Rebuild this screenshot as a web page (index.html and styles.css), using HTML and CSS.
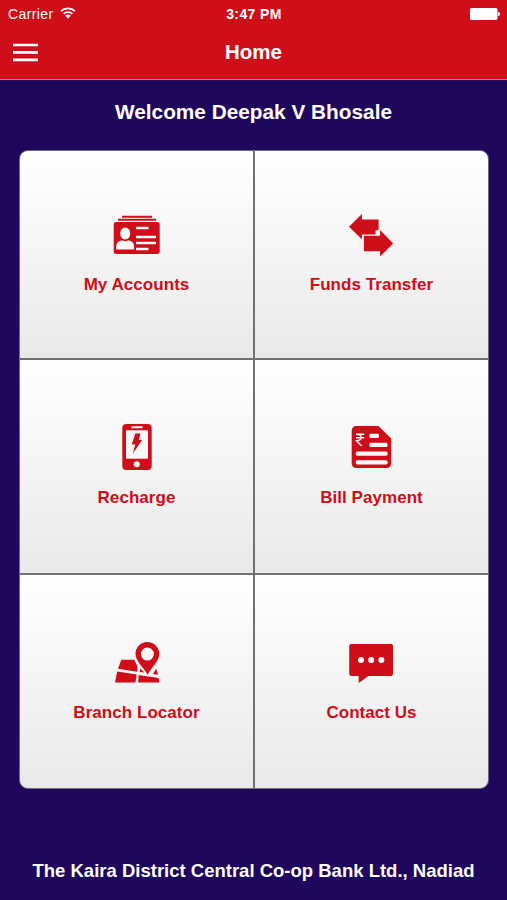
FILE: index.html
```html
<!DOCTYPE html>
<html lang="en">
	<head>
		<meta charset="utf-8" />
		<meta name="viewport" content="width=device-width, initial-scale=1.0" />
		<title>Home</title>
		<link rel="stylesheet" href="styles.css">
	</head>
	<body>
		<header class="header">
			<div class="status">
				<div class="status-carrier">
					<span>Carrier</span>
					<svg class="wifi" width="16" height="12" viewBox="0 0 16 12" fill="none" stroke="#fff" stroke-width="1.8">
						<path d="M1 4.1a10.2 10.2 0 0 1 14 0M3.6 6.8a6.5 6.5 0 0 1 8.8 0" />
						<path d="M8 11.6 5.2 8.7a3.8 3.8 0 0 1 5.6 0z" fill="#fff" stroke="none" />
					</svg>
				</div>
				<div class="status-time">3:47 PM</div>
				<svg class="battery" width="30" height="12" viewBox="0 0 30 12" fill="#fff">
					<rect width="27.5" height="12" rx="1.8" />
					<path d="M28 4a2 2 0 0 1 0 4z" />
				</svg>
			</div>
			<div class="navbar">
				<button type="button" class="menu" aria-label="Menu">
					<svg width="25" height="19" viewBox="0 0 25 19" stroke="#fff" stroke-width="2.7">
						<path d="M0 2h25M0 9.4h25M0 16.9h25" />
					</svg>
				</button>
				<h1>Home</h1>
			</div>
		</header>

		<main>
			<h2 class="welcome">Welcome Deepak V Bhosale</h2>

			<nav class="grid">
				<a class="tile">
					<svg class="icon" width="48" height="40" viewBox="0 0 48 40" fill="#ce0e18">
						<path d="M9 .7h30v2H9zM5 3.8h38v2H5z" />
						<rect x=".7" y="7" width="46" height="32" rx="2.5" />
						<g fill="#f8f8f8">
							<ellipse cx="12.2" cy="18.6" rx="5" ry="6" />
							<path d="M3.3 34.6c-.7-6 1.3-8.5 5.8-9.4 2 1.4 4.2 1.4 6.2 0 4.6.9 6.3 3.5 5.8 9.4z" />
							<path d="M23 11.8h12.5v2.4H23zM23 20.8h20v2.4H23zM23 26.8h20v2.4H23zM23 32.8h12.5v2.4H23z" />
						</g>
					</svg>
					<span>My Accounts</span>
				</a>
				<a class="tile">
					<svg class="icon icon-transfer" width="46" height="44" viewBox="0 0 46 44" fill="#ce0e18">
						<path d="M1 13.8 13.9 1v5.4H30.6v10.8h-3.1v4.4H13.9v4.7z" />
						<path d="M15.9 22.8h16.2V17L45.2 30.5 32.1 43.5v-5.2H15.9z" />
					</svg>
					<span>Funds Transfer</span>
				</a>
				<a class="tile">
					<svg class="icon icon-recharge" width="32" height="48" viewBox="0 0 32 48" fill="#ce0e18">
						<rect x="1.3" y="1" width="29.4" height="46" rx="4" />
						<g fill="#f8f8f8">
							<path d="M5 7.3h22v28.4H5z" />
							<rect x="10.3" y="3.2" width="11.4" height="2" rx="1" />
							<circle cx="15.8" cy="41.3" r="3" />
						</g>
						<path d="M14.2 10.5h5.2L17.8 17h3.3L11.8 30.8l2.5-9.3h-3.5z" />
					</svg>
					<span>Recharge</span>
				</a>
				<a class="tile">
					<svg class="icon icon-bill" width="42" height="44" viewBox="0 0 42 44" fill="#ce0e18">
						<path d="M5.5 1h22L40.2 13.5V38.5a4.5 4.5 0 0 1-4.5 4.5H5.2A4.5 4.5 0 0 1 .7 38.5V5.5A4.5 4.5 0 0 1 5.2 1z" />
						<g fill="#f8f8f8">
							<rect x="18.5" y="8.8" width="9.4" height="4.2" rx="1.2" />
							<rect x="18.5" y="17.7" width="18" height="4.2" rx="1.2" />
							<rect x="4.7" y="26.4" width="32" height="4.4" rx="1.8" />
							<rect x="4.7" y="35.2" width="32" height="4.3" rx="1.8" />
						</g>
						<path d="M5 9.3h8.2M5 12.7h8.2M5.6 9.3c6.2-.3 6.2 6.5 0 6.4l5 5.2" fill="none" stroke="#f8f8f8" stroke-width="1.5" />
					</svg>
					<span>Bill Payment</span>
				</a>
				<a class="tile">
					<svg class="icon" width="46" height="42" viewBox="0 0 46 42" fill="#ce0e18">
						<path d="M7.3 18.8h12.9l3.3 6.5-.3 5.4L4 27.8zM3.2 30.6l19.5 2.8-1.3 8H1zM24.6 34l20 2.9.9 4.6H24.2zM26.2 27.6l4.2 4-4.7-.7zM42.3 27.5l1.7 6.2-5.2-.8z" />
						<path fill-rule="evenodd" d="M33.3 1c6.6 0 12 5.2 12 11.7C45.3 20.3 38 25.5 33.7 33.8 29 25.5 21.5 20.3 21.5 12.7 21.5 6.2 26.7 1 33.3 1zm.1 5.6a6.5 6.5 0 1 0 0 13 6.5 6.5 0 0 0 0-13z" />
					</svg>
					<span>Branch Locator</span>
				</a>
				<a class="tile">
					<svg class="icon icon-contact" width="46" height="40" viewBox="0 0 46 40" fill="#ce0e18">
						<path d="M3 1h40.2a1.8 1.8 0 0 1 1.8 1.8v28.3a1.8 1.8 0 0 1-1.8 1.8H20.5L10.7 40v-7.1H3a1.8 1.8 0 0 1-1.8-1.8V2.8A1.8 1.8 0 0 1 3 1z" />
						<g fill="#f8f8f8">
							<circle cx="13" cy="17" r="3" />
							<circle cx="23.2" cy="17" r="3" />
							<circle cx="33.4" cy="17" r="3" />
						</g>
					</svg>
					<span>Contact Us</span>
				</a>
			</nav>
		</main>

		<footer class="footer">The Kaira District Central Co-op Bank Ltd., Nadiad</footer>
	</body>
</html>
```

FILE: styles.css
```css
* {
	box-sizing: border-box;
}

body {
	display: flex;
	flex-direction: column;
	height: 900px;
	margin: 0;
	color: #fff;
	background-color: #1e075c;
	font-family: "Liberation Sans", Arial, sans-serif;
}

h1,
h2 {
	margin: 0;
	font-weight: bold;
}

.header {
	height: 80px;
	border-bottom: 1px solid #b67398;
	background-color: #ce0e18;
}

.status {
	display: grid;
	grid-template-columns: 1fr auto 1fr;
	align-items: center;
	height: 28px;
	padding: 0 7px 0 8px;
	font-size: 14px;
	letter-spacing: 0.4px;
}

.status-carrier {
	display: flex;
	align-items: center;
	gap: 6px;
}

.wifi {
	margin-top: -2px;
}

.status-time {
	font-weight: bold;
}

.battery {
	justify-self: end;
}

.navbar {
	display: grid;
	grid-template-columns: 1fr auto 1fr;
	align-items: center;
	height: 48px;
	padding: 0 13px;
}

.navbar h1 {
	font-size: 20.5px;
}

.menu {
	display: flex;
	width: 25px;
	padding: 0;
	border: none;
	background: none;
}

.welcome {
	height: 70px;
	font-size: 20.8px;
	line-height: 64px;
	text-align: center;
}

.grid {
	display: grid;
	grid-template-columns: 233px 233px;
	grid-template-rows: 207px 213px 213px;
	gap: 2px;
	width: 470px;
	margin-left: 19px;
	overflow: hidden;
	border: 1px solid #706c7c;
	border-radius: 9px;
	background-color: #707070;
}

.tile {
	display: flex;
	flex-direction: column;
	align-items: center;
	justify-content: flex-end;
	padding-bottom: 65px;
	color: #ce0e18;
	background-image: linear-gradient(#fff, #e9e9e9);
	font-size: 17px;
	font-weight: bold;
	line-height: 20px;
	letter-spacing: 0.05px;
}

/* the first row is shorter */
.tile:nth-child(-n + 2) {
	padding-bottom: 63px;
}

.icon {
	margin-bottom: 20px;
}

.icon-transfer {
	margin-right: 2px;
	margin-bottom: 18px;
}

.icon-recharge {
	margin-bottom: 17px;
}

.icon-bill {
	margin-bottom: 19px;
}

.icon-contact {
	margin-right: 2px;
}

.footer {
	margin-top: auto;
	padding-bottom: 19px;
	font-size: 18.5px;
	font-weight: bold;
	line-height: 21px;
	text-align: center;
	white-space: nowrap;
}
```
